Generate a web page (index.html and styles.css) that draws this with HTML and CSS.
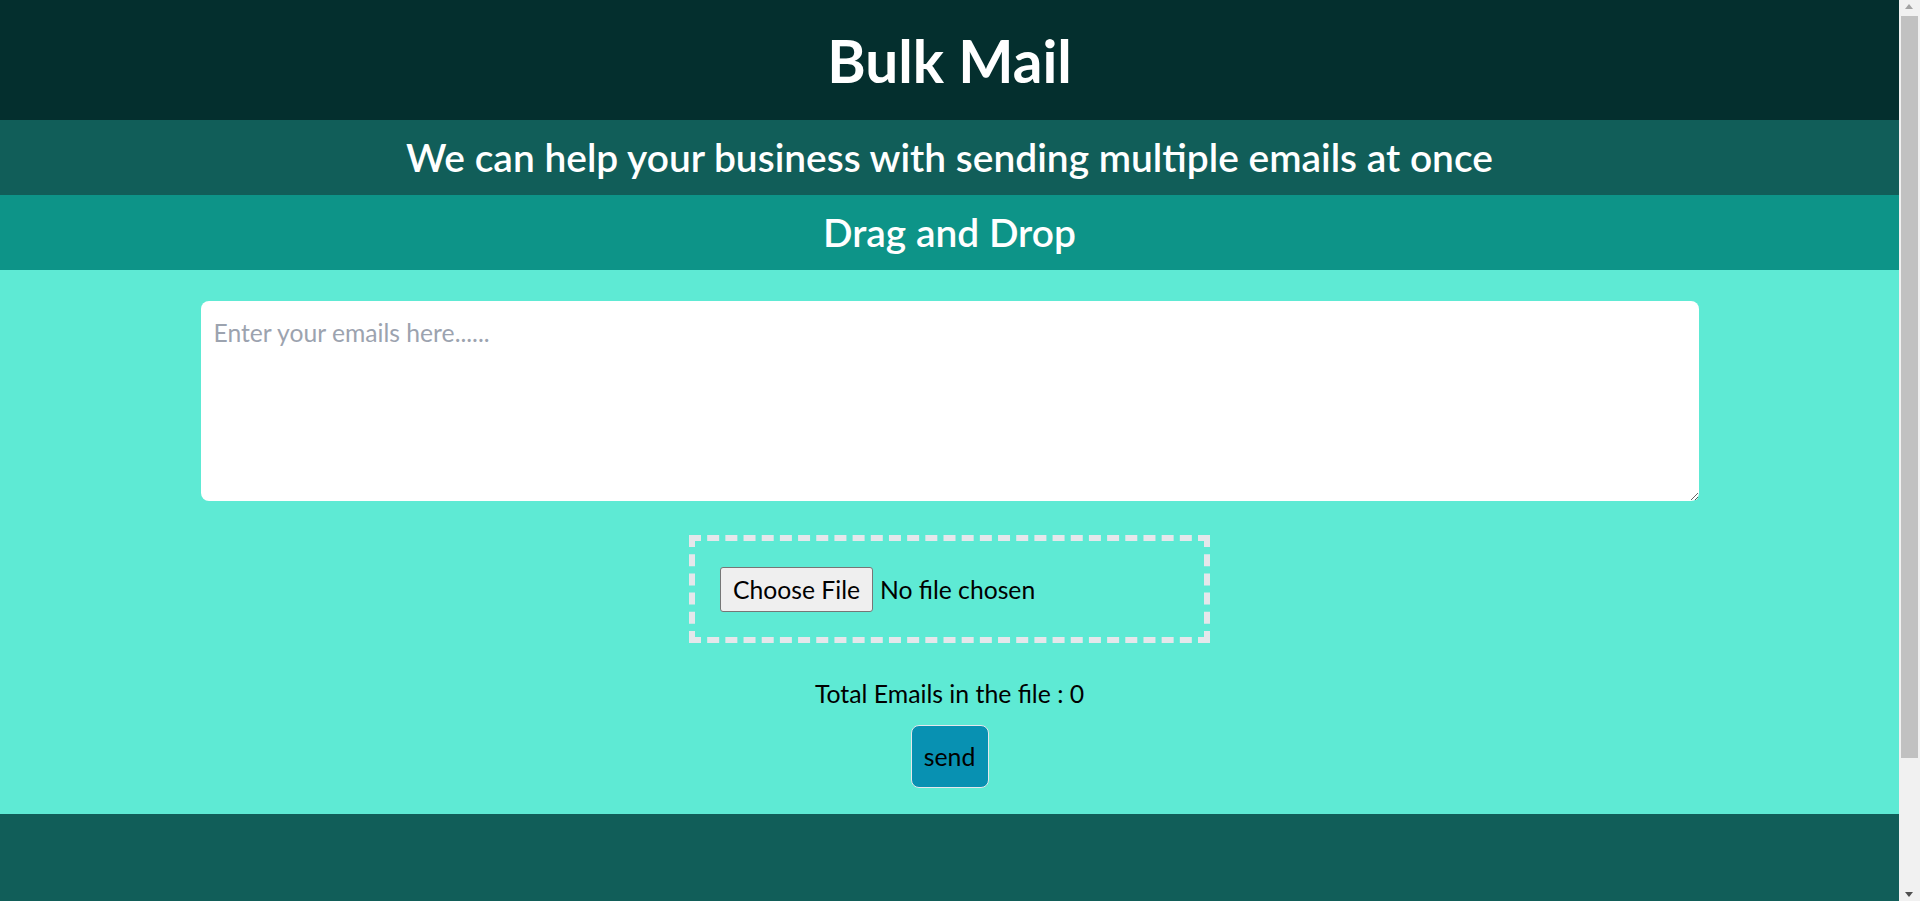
FILE: index.html
```html
<!DOCTYPE html>
<html lang="en">
<head>
<meta charset="utf-8">
<title>Bulk Mail</title>
<link rel="stylesheet" href="styles.css">
</head>
<body>
<div class="page">
  <header class="top"><h1 class="title">Bulk Mail</h1></header>
  <section class="tagline"><h2 class="bar-text">We can help your business with sending multiple emails at once</h2></section>
  <section class="dropbar"><h2 class="bar-text">Drag and Drop</h2></section>
  <main class="panel">
    <textarea class="emails" placeholder="Enter your emails here......"></textarea>
    <div class="dropzone"><input class="file" type="file"></div>
    <p class="count">Total Emails in the file : 0</p>
    <button class="send" type="button">send</button>
  </main>
  <footer class="bottom"></footer>
</div>
<div class="scrollbar" aria-hidden="true">
  <span class="sb-up"></span>
  <span class="sb-thumb"></span>
  <span class="sb-down"></span>
</div>
</body>
</html>
```
FILE: styles.css
```css
html, body { margin: 0; padding: 0; }
body { font-family: "Lato", "Open Sans", sans-serif; color: #000; }
.page { margin-right: 21px; }
.top { background: #042f2e; padding: 30px 0; text-align: center; }
.title { margin: 0; font-size: 58.5px; line-height: 60px; font-weight: 700; color: #fff; }
.tagline { background: #115e59; padding: 15px 0; text-align: center; }
.dropbar { background: #0d9488; padding: 15px 0; text-align: center; }
.bar-text { margin: 0; font-size: 38.9px; line-height: 45px; font-weight: 600; color: #fff; }
.panel { background: #5eead4; padding: 31px 0 26px; display: flex; flex-direction: column; align-items: center; }
.emails { box-sizing: border-box; width: 1498px; height: 200px; border: 0; border-radius: 8px; padding: 14px 13px; font: 24.7px/35px "Lato", sans-serif; background: #fff; color: #000; }
.emails::placeholder { color: #9ca3af; }
.dropzone { box-sizing: border-box; margin-top: 34px; width: 521px; height: 108px; border: 6px dashed #e5e7eb; padding: 0 25px; display: flex; align-items: center; }
.file { font: 24.7px "Lato", sans-serif; color: #000; }
.file::file-selector-button { font: inherit; color: #000; padding: 7px 12px; margin-right: 7px; border: 1px solid #767676; border-radius: 3px; background: #efefef; }
.count { margin: 32px 0 0; font-size: 24.8px; line-height: 37px; }
.send { margin-top: 13px; box-sizing: border-box; width: 78px; height: 63px; background: #0891b2; border: 1px solid #e5e7eb; border-radius: 8px; font: 24.8px "Lato", sans-serif; color: #000; padding: 0; }
.bottom { background: #115e59; height: 239px; }
.scrollbar { position: fixed; top: 0; right: 0; width: 21px; height: 100%; background: #f1f1f1; }
.sb-up { position: absolute; top: 4px; left: 6px; width: 0; height: 0; border-left: 4.5px solid transparent; border-right: 4.5px solid transparent; border-bottom: 5px solid #a3a3a3; }
.sb-thumb { position: absolute; top: 16px; left: 2px; width: 17px; height: 742px; background: #c1c1c1; }
.sb-down { position: absolute; bottom: 4px; left: 6px; width: 0; height: 0; border-left: 4.5px solid transparent; border-right: 4.5px solid transparent; border-top: 5px solid #505050; }
```
